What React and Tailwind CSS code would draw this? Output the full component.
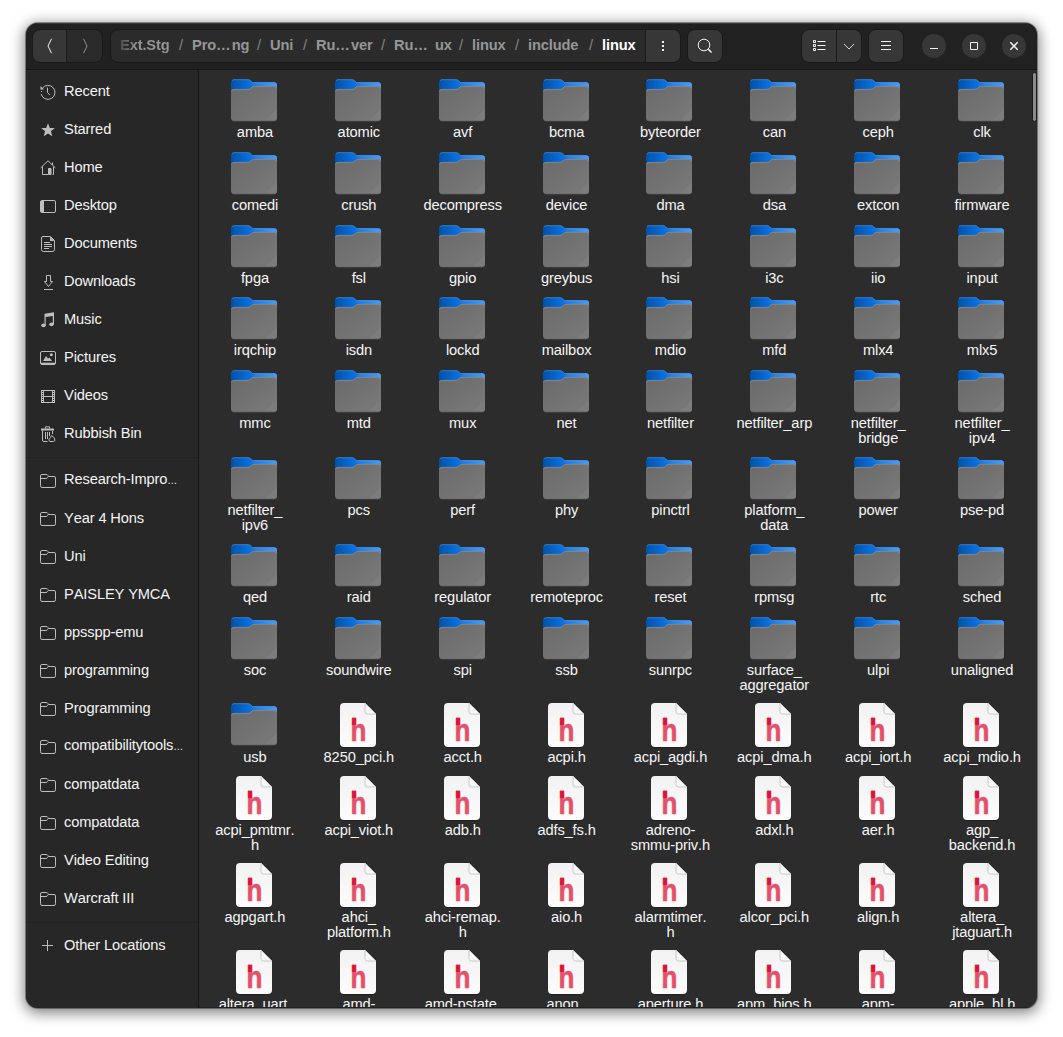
import React from 'react';

const crumbs = [
  ['Ext.Stg', 'w-[50px] text-transparent bg-clip-text bg-linear-to-r from-[#4a4a4a] to-[#969696] to-30%'],
  ['Pro…\u200ang', 'w-14'],
  ['Uni', 'w-6'],
  ['Ru…\u200aver', 'w-14'],
  ['Ru…\u2002ux', 'w-14'],
  ['linux', 'w-[34px]'],
  ['include', 'w-[52px]'],
  ['linux', 'text-white'],
];

const places = ['Recent', 'Starred', 'Home', 'Desktop', 'Documents', 'Downloads', 'Music', 'Pictures', 'Videos', 'Rubbish Bin'];
const bookmarks = ['Research-Impro…', 'Year 4 Hons', 'Uni', 'PAISLEY YMCA', 'ppsspp-emu', 'programming', 'Programming', 'compatibilitytools…', 'compatdata', 'compatdata', 'Video Editing', 'Warcraft III'];

// Each row: row height, icon box height, names.
const rows = [
  ['h-[73px]', 'h-[46px]', 'amba|atomic|avf|bcma|byteorder|can|ceph|clk'],
  ['h-[73px]', 'h-[46px]', 'comedi|crush|decompress|device|dma|dsa|extcon|firmware'],
  ['h-[72px]', 'h-[46px]', 'fpga|fsl|gpio|greybus|hsi|i3c|iio|input'],
  ['h-[73px]', 'h-[46px]', 'irqchip|isdn|lockd|mailbox|mdio|mfd|mlx4|mlx5'],
  ['h-[87px]', 'h-[46px]', 'mmc|mtd|mux|net|netfilter|netfilter_arp|netfilter_\nbridge|netfilter_\nipv4'],
  ['h-[87px]', 'h-[46px]', 'netfilter_\nipv6|pcs|perf|phy|pinctrl|platform_\ndata|power|pse-pd'],
  ['h-[73px]', 'h-[46px]', 'qed|raid|regulator|remoteproc|reset|rpmsg|rtc|sched'],
  ['h-[86px]', 'h-[46px]', 'soc|soundwire|spi|ssb|sunrpc|surface_\naggregator|ulpi|unaligned'],
  ['h-[73px]', 'h-[47px]', 'usb|8250_pci.h|acct.h|acpi.h|acpi_agdi.h|acpi_dma.h|acpi_iort.h|acpi_mdio.h'],
  ['h-[87px]', 'h-[47px]', 'acpi_pmtmr.\nh|acpi_viot.h|adb.h|adfs_fs.h|adreno-\nsmmu-priv.h|adxl.h|aer.h|agp_\nbackend.h'],
  ['h-[87px]', 'h-[47px]', 'agpgart.h|ahci_\nplatform.h|ahci-remap.\nh|aio.h|alarmtimer.\nh|alcor_pci.h|align.h|altera_\njtaguart.h'],
  ['h-[62px]', 'h-[47px]', 'altera_uart.|amd-|amd-pstate.|anon_|aperture.h|apm_bios.h|apm-|apple_bl.h'],
];

const folders = new Set(rows.slice(0, 8).flatMap((r) => r[2].split('|')).concat('usb'));

function Defs() {
  return (
    <svg className="absolute" width="0" height="0" aria-hidden="true">
      <defs>
        <linearGradient id="tab" x1="0" y1="0" x2="1" y2="0">
          <stop offset="0" stopColor="#0052a8" />
          <stop offset="0.42" stopColor="#0a70df" />
          <stop offset="0.55" stopColor="#2080ea" />
          <stop offset="1" stopColor="#4a9cf4" />
        </linearGradient>
        <linearGradient id="front" x1="0" y1="0" x2="1" y2="1">
          <stop offset="0" stopColor="#6a6a6a" />
          <stop offset="1" stopColor="#7a7a7a" />
        </linearGradient>
        <linearGradient id="page" x1="0" y1="0" x2="0" y2="1">
          <stop offset="0" stopColor="#f2f2f2" />
          <stop offset="1" stopColor="#fcfcfc" />
        </linearGradient>
        <clipPath id="stemTop"><rect x="12" y="10" width="5.500" height="12" /></clipPath>
      </defs>
    </svg>
  );
}

function FolderIcon() {
  return (
    <svg width="48" height="44" viewBox="0 0 48 44" className="block">
      <path d="M1 12V3.5Q1 .5 4 .5H18Q19.5 .5 20.5 1.5L22.5 3.3H44Q47 3.3 47 6.3V16H1Z" fill="url(#tab)" />
      <path d="M2 1.8Q2.7 .7 4 .7H18Q19.5 .7 20.5 1.7L22.5 3.6H44Q46 3.6 46.6 5" fill="none" stroke="#4f9bea" strokeWidth=".6" />
      <path d="M1 13Q1 10 4 10H18Q19.5 10 20.5 9L22 7.700Q23 7 24.500 7H44Q47 7 47 10V38.500Q47 42 43.500 42H4.500Q1 42 1 38.500Z" fill="url(#front)" />
      <path d="M1.500 12.500Q1.800 10.400 4 10.400H18Q19.500 10.400 20.500 9.400L22 8.100Q23 7.400 24.500 7.400H44Q46.400 7.400 46.600 9.500" fill="none" stroke="#8b8b8b" strokeWidth=".8" />
      <path d="M47 30V38.500Q47 42 43.500 42H34.500Z" fill="#7d7d7d" />
      <path d="M2 41.200Q3 42 4.500 42H43.500Q45.500 42 46.300 40.900" fill="none" stroke="#606060" strokeWidth=".7" />
    </svg>
  );
}

function Letter({ color }) {
  return (
    <text transform="translate(11.500 37.800) scale(.84 1)" fontFamily="'Liberation Sans', Arial, sans-serif" fontWeight="700" fontSize="31" fill={color} stroke={color} strokeWidth=".6">h</text>
  );
}

function HeaderFileIcon() {
  return (
    <svg width="38" height="46" viewBox="0 0 38 46" className="block">
      <path d="M5 0H26L37 11V40Q37 44 33 44H5Q1 44 1 40V4Q1 0 5 0Z" fill="#1d1d1d" transform="translate(0 .8)" />
      <path d="M5 0H26L37 11V40Q37 44 33 44H5Q1 44 1 40V4Q1 0 5 0Z" fill="url(#page)" />
      <path d="M26 0V8.500Q26 11 28.500 11H37Z" fill="#f8f8f8" stroke="#bdbdbd" strokeWidth=".8" />
      <Letter color="#e4506a" />
      <g clipPath="url(#stemTop)" aria-hidden="true"><Letter color="#dc143c" /></g>
    </svg>
  );
}

const glyphs = {
  Recent: (
    <g fill="none" stroke="currentColor">
      <path d="M2.300 4.300A7 7 0 1 1 1.200 10" />
      <path d="M7.500 3.500V8.500L9.800 11" />
      <path d="M.5 2V5.500H4Z" fill="currentColor" stroke="none" />
      <path d="M1 7.500H2" />
    </g>
  ),
  Starred: <path fill="currentColor" d="M8 1.300L9.800 6H14.800L10.900 9.200L12.300 14.300L8 11.400L3.700 14.300L5.100 9.200L1.200 6H6.200Z" />,
  Home: (
    <g fill="none" stroke="currentColor">
      <path d="M.6 7.900L8 .8L15.400 7.900M2.500 6.500V14.500H8M12.500 14.500H13.500V6.500M12.500 2.500V5" />
      <path d="M8.500 8.500H11V14.500H8.500Z" fill="currentColor" />
    </g>
  ),
  Desktop: (
    <g fill="none" stroke="currentColor">
      <rect x=".5" y="2.500" width="15" height="12" rx="1.500" />
      <path d="M1 3H4V14H1Z" fill="currentColor" stroke="none" />
    </g>
  ),
  Documents: (
    <g fill="none" stroke="currentColor">
      <path d="M3 .5H10.500L14.500 4.500V13.500Q14.500 15.500 12.500 15.500H3.500Q1.500 15.500 1.500 13.500V2Q1.500 .5 3 .5Z" />
      <path d="M10 .5V5H14.500Z" fill="currentColor" stroke="none" />
      <path d="M4 6.500H10M4 8.500H12M4 10.500H12M4 12.500H9" />
    </g>
  ),
  Downloads: (
    <path fill="none" stroke="currentColor" d="M6.500 1.500H10.500V7.500H12.500L8.500 12.500L4.500 7.500H6.500ZM4 15.500H13" />
  ),
  Music: (
    <g fill="currentColor">
      <ellipse cx="3.500" cy="13.300" rx="2.200" ry="1.900" />
      <ellipse cx="11.500" cy="12.300" rx="2.200" ry="1.900" />
      <path d="M4.500 1.800L14 .2V12.300H12.800V3.900L5.700 5.100V13.300H4.500Z" />
    </g>
  ),
  Pictures: (
    <g fill="none" stroke="currentColor">
      <rect x=".5" y="1.500" width="15" height="13" rx="1.500" />
      <path d="M1 13.500H15" strokeWidth="1.600" />
      <path d="M3 11L6 6L8 8.500L9.500 7.500L12 11Z" fill="currentColor" stroke="none" />
      <circle cx="11.300" cy="4.800" r="1.500" fill="currentColor" stroke="none" />
    </g>
  ),
  Videos: (
    <g fill="none" stroke="currentColor">
      <path d="M3.500 2V15M12.500 2V15M3.500 2.500H12.500M3.500 8.500H12.500M3.500 14.500H12.500" />
      <path d="M2.500 2V15M13.500 2V15" strokeDasharray="1 1" />
      <path d="M1.500 2V15M14.500 2V15" />
    </g>
  ),
  'Rubbish Bin': (
    <g fill="none" stroke="currentColor">
      <path d="M1 2.500H14V4.500H1Z" fill="currentColor" stroke="none" />
      <path d="M5.500 2.500V.8H9.500V2.500M2.500 4.500V14Q2.500 15.500 4 15.500H7.500M5.500 6V13M7.500 6V13M9.500 6V10M12.500 4.500V8" />
      <path d="M10 15.500Q8.500 15 9 13.200L10.500 11.500L11.500 9.500L14.500 12Q15.800 15.500 13.500 15.500Z" />
    </g>
  ),
  Folder: (
    <g fill="none" stroke="currentColor">
      <path d="M2 1.500H6Q7.500 1.500 8 2.500L8.500 3.500H14Q15.500 3.500 15.500 5V12.500Q15.500 14.500 14 14.500H2Q.5 14.500 .5 12.500V3Q.5 1.500 2 1.500Z" />
      <path d="M.5 5.500H6Q7 5.500 7.500 4.500L8.200 3.500" />
    </g>
  ),
  Other: <path d="M7.500 2V13M2 7.500H13" stroke="currentColor" />,
};

function Place({ name, icon }) {
  const cut = name.endsWith('…');
  return (
    <div className="flex h-[38px] items-center gap-2 pl-3.5 text-[#f4f4f4]">
      <svg width="16" height="16" viewBox="0 0 16 16" className="mt-[2px] shrink-0 text-[#bebebe]">{glyphs[icon]}</svg>
      <span className="whitespace-nowrap leading-[18px]">
        {cut ? name.slice(0, -1) : name}
        {cut && <span className="text-[10px]">…</span>}
      </span>
    </div>
  );
}

function Rule() {
  return <div className="h-[9px] pt-[5px]"><div className="h-px bg-[#222222]" /></div>;
}

const button = 'flex items-center justify-center bg-[#373737]';
const frame = 'flex h-[34px] overflow-hidden rounded-lg border border-[#191919]';

function Stroke({ d, size = 16, className = '' }) {
  return (
    <svg width={size} height={size} viewBox="0 0 16 16" fill="none" stroke="currentColor" className={className}>
      <path d={d} />
    </svg>
  );
}

function Header() {
  return (
    <header className="flex h-[47px] shrink-0 items-center border-t border-b border-t-[#363636] border-b-[#151515] bg-[#212121] pb-px text-[#f4f4f4]">
      <div className={frame + ' ml-1.5 w-[71px]'}>
        <div className={button + ' w-[34px] border-r border-[#191919]'}><Stroke d="M9.500 .8L6 8L9.500 15.200" /></div>
        <div className="flex flex-1 items-center justify-center bg-[#2a2a2a] text-[#8f8f8f]"><Stroke d="M6.500 .8L10 8L6.500 15.200" /></div>
      </div>
      <div className={frame + ' ml-[7px] w-[571px] bg-[#2b2b2b]'}>
        <div className="flex flex-1 items-center pb-[3px] pl-[9px] font-bold text-[#969696]">
          {crumbs.map(([label, style], i) => (
            <React.Fragment key={i}>
              {i > 0 && <span className="w-[22px] text-center font-normal text-[#858585]">/</span>}
              <span className={'whitespace-nowrap ' + style}>{label}</span>
            </React.Fragment>
          ))}
        </div>
        <div className={button + ' w-[35px] border-l border-[#191919]'}>
          <svg width="16" height="16" viewBox="0 0 16 16" fill="currentColor"><path d="M7 3H9V5H7ZM7 7H9V9H7ZM7 11H9V13H7Z" /></svg>
        </div>
      </div>
      <div className={frame + ' ml-1.5 w-9'}>
        <div className={button + ' flex-1'}>
          <svg width="16" height="16" viewBox="0 0 16 16" fill="none" stroke="currentColor"><circle cx="7" cy="7" r="5.800" /><path d="M11.300 11.300L14.500 14.500" strokeWidth="1.500" /></svg>
        </div>
      </div>
      <div className={frame + ' ml-[78px] w-[61px]'}>
        <div className={button + ' w-[35px] border-r border-[#191919]'}>
          <Stroke d="M2.500 2.500H4.500V4.500H2.500ZM2.500 6.500H4.500V8.500H2.500ZM2.500 10.500H4.500V12.500H2.500ZM6.500 3.500H14.500M6.500 7.500H14.500M6.500 11.500H14.500" />
        </div>
        <div className={button + ' flex-1'}><Stroke d="M3 6L8 11L13 6" className="text-[#d8d8d8]" /></div>
      </div>
      <div className={frame + ' ml-1.5 w-9'}>
        <div className={button + ' flex-1'}><Stroke d="M3 3.500H13M3 7.500H13M3 11.500H13" /></div>
      </div>
      <div className="ml-[18px] flex gap-4">
        <div className="flex size-6 items-center justify-center rounded-full bg-[#373737]"><Stroke d="M4 10.500H12" /></div>
        <div className="flex size-6 items-center justify-center rounded-full bg-[#373737]"><Stroke d="M4.500 4.500H11.500V11.500H4.500Z" /></div>
        <div className="flex size-6 items-center justify-center rounded-full bg-[#373737]"><svg width="16" height="16" viewBox="0 0 16 16" stroke="currentColor" strokeWidth="1.500"><path d="M4.300 4.300L11.700 11.700M11.700 4.300L4.300 11.700" /></svg></div>
      </div>
    </header>
  );
}

export default function App() {
  return (
    <div className="h-[1037px] w-[1063px] overflow-hidden bg-white pt-[23px] pl-[26px] font-['Liberation_Sans',Arial,sans-serif] text-[14.667px] tracking-[-0.13px] [font-kerning:none]">
      <Defs />
      <div className="flex h-[985px] w-[1011px] flex-col overflow-hidden rounded-xl bg-[#2c2c2c] shadow-[0_0_0_1px_rgba(0,0,0,0.35),0_3px_14px_2px_rgba(0,0,0,0.5)]">
        <Header />
        <div className="flex min-h-0 flex-1">
          <nav className="w-[173px] shrink-0 overflow-hidden border-r border-[#171717] bg-[#272727] pt-[2px]">
            {places.map((p) => <Place key={p} name={p} icon={p} />)}
            <Rule />
            {bookmarks.map((p, i) => <Place key={i} name={p} icon="Folder" />)}
            <Rule />
            <Place name="Other Locations" icon="Other" />
          </nav>
          <main className="flex min-w-0 flex-1 border-b border-[#202020]">
            <div className="ml-[3px] w-[831px] shrink-0 overflow-hidden pt-[9px]">
              {rows.map(([height, iconHeight, names]) => (
                <div key={names} className={'grid grid-cols-8 ' + height}>
                  {names.split('|').map((n) => (
                    <div key={n} className="flex flex-col items-center">
                      <div className={iconHeight}>{folders.has(n) ? <FolderIcon /> : <HeaderFileIcon />}</div>
                      <div className="pl-0.5 text-center leading-[15px] whitespace-pre text-[#f6f6f6]">{n}</div>
                    </div>
                  ))}
                </div>
              ))}
            </div>
            <div className="mt-[2px] -ml-px h-[50px] w-[5px] rounded-full border border-[#1a1a1a] bg-[#8c8c8c]" />
          </main>
        </div>
      </div>
    </div>
  );
}
